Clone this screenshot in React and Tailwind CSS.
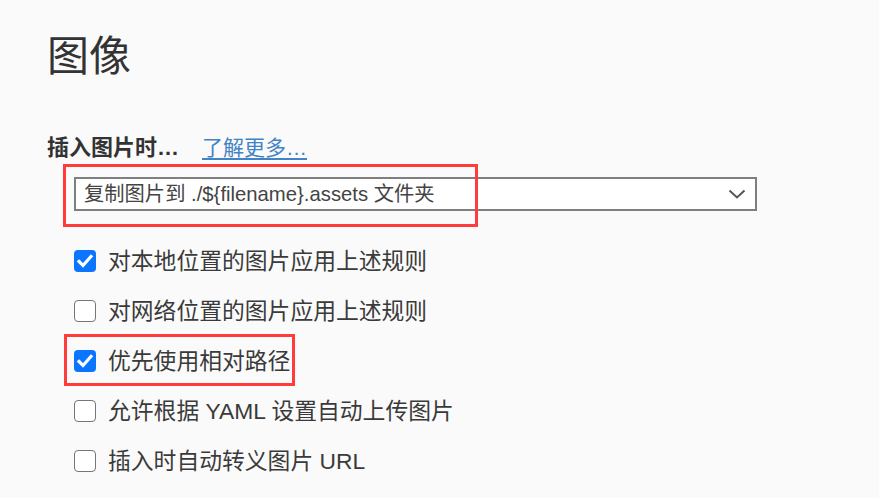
import React from 'react';

const FONT = { fontFamily: '"Liberation Sans", "Noto Sans CJK SC", sans-serif' };

const rows = [
  { label: '对本地位置的图片应用上述规则', checked: true },
  { label: '对网络位置的图片应用上述规则', checked: false },
  { label: '优先使用相对路径', checked: true, marked: true },
  { label: '允许根据 YAML 设置自动上传图片', checked: false },
  { label: '插入时自动转义图片 URL', checked: false },
];

const Check = ({ checked }) =>
  checked ? (
    <span className="w-[22px] h-[22px] rounded-[4px] bg-[#0a76ff] shrink-0 flex">
      <svg width="22" height="22" viewBox="0 0 22 22" fill="none">
        <path d="M5 11.5 L9 15.5 L17 6.5" stroke="white" strokeWidth="3.2" strokeLinecap="square" />
      </svg>
    </span>
  ) : (
    <span className="w-[22px] h-[22px] rounded-[4px] bg-white border-[1.5px] border-[#767676] shrink-0" />
  );

export default function App() {
  return (
    <div className="w-[879px] h-[498px] overflow-hidden bg-[#fafafa] pl-[47px] text-[#333]" style={FONT}>
      {/* heading */}
      <h1 className="pt-[36px] text-[42px] leading-[42px] font-normal text-[#333]">图像</h1>

      {/* insert image option */}
      <div className="mt-[59px] flex items-center h-[22px] leading-[22px]">
        <span className="text-[22px] font-bold text-[#333]">插入图片时…</span>
        <a className="ml-[23px] text-[21px] text-[#4183c4] underline underline-offset-[3px]">了解更多…</a>
      </div>

      <div className="relative mt-[18px] ml-[27px] w-[683px] h-[34px] bg-white border-2 border-[#7f7f7f] flex items-center pl-[8px] pr-[8px]">
        <span className="text-[20.3px] text-[#444] leading-none">复制图片到 ./${'{'}filename{'}'}.assets 文件夹</span>
        <svg className="ml-auto mr-[1px]" width="18" height="10" viewBox="0 0 18 10" fill="none">
          <path d="M1.5 1.5 L9 8.5 L16.5 1.5" stroke="#555" strokeWidth="2" />
        </svg>
        {/* annotation box (offsets measured from the padding box) */}
        <div className="absolute -left-[13px] -top-[15px] w-[415px] h-[63px] border-[3px] border-[#ff3b3b]" />
      </div>

      {/* checkboxes */}
      <div className="mt-[25px] ml-[27px] flex flex-col">
        {rows.map((r) => (
          <div key={r.label} className="relative h-[50px] flex items-center gap-[12px]">
            <Check checked={r.checked} />
            <span className="text-[22.8px] leading-none text-[#3a3a3a]">{r.label}</span>
            {r.marked && (
              <div className="absolute -left-[10px] top-[-2px] w-[231px] h-[52px] border-[3px] border-[#ff3b3b]" />
            )}
          </div>
        ))}
      </div>
    </div>
  );
}
